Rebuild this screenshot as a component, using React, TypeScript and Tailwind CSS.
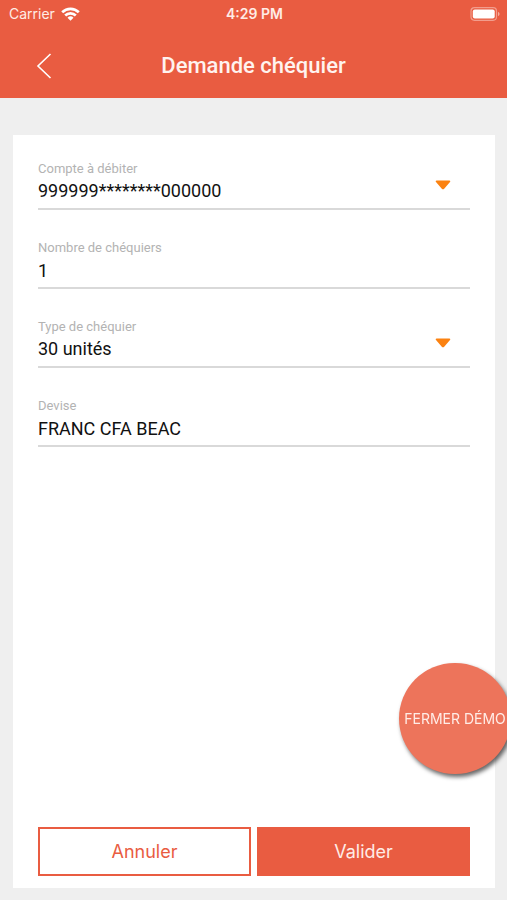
import { useState } from "react";

const inputClass =
  "block w-full h-8 pb-1 bg-transparent border-b-2 border-[#d9d9d9] rounded-none text-[18px] leading-[26px] text-[#111111] appearance-none outline-none focus:border-[#e95c41]";

const labelClass = "block text-[13px] leading-[18px] text-[#b3b3b3]";

function TextField({ id, label, value, onChange, readOnly }: {
  id: string;
  label: string;
  value: string;
  onChange?: (v: string) => void;
  readOnly?: boolean;
}) {
  return (
    <div>
      <label htmlFor={id} className={labelClass}>{label}</label>
      <input id={id} type="text" value={value} readOnly={readOnly}
        onChange={(e) => onChange?.(e.target.value)} className={inputClass} />
    </div>
  );
}

function SelectField({ id, label, value, options, onChange }: {
  id: string;
  label: string;
  value: string;
  options: string[];
  onChange: (v: string) => void;
}) {
  return (
    <div className="relative">
      <label htmlFor={id} className={labelClass}>{label}</label>
      <select id={id} value={value} onChange={(e) => onChange(e.target.value)} className={inputClass}>
        {options.map((o) => <option key={o} value={o}>{o}</option>)}
      </select>
      <svg className="absolute right-[19px] top-5 w-4 h-3 pointer-events-none" viewBox="0 0 16 12" aria-hidden="true">
        <path d="M1.600 .6h12.800c.9 0 1.200.9.6 1.500L9.200 8.700c-.7.700-1.700.700-2.400 0L1 2.100C.4 1.500.7.6 1.600.6z" fill="#fb8211" />
      </svg>
    </div>
  );
}

function StatusBar() {
  return (
    <div className="grid grid-cols-3 items-center h-[27px] pl-[9px] pr-[7px] font-[Inter,sans-serif] text-[14px] text-[#ffece6]">
      <div className="flex items-center gap-[6px]">
        <span>Carrier</span>
        <svg className="w-[19px] h-[14px]" viewBox="0 0 19 14" aria-hidden="true">
          <g fill="none" stroke="#fff" strokeWidth="2.700">
            <path d="M1.200 5.200a11.800 11.800 0 0 1 16.600 0" />
            <path d="M4.200 8.500a7.500 7.500 0 0 1 10.600 0" />
          </g>
          <path d="M9.500 13.700l-3-3a4.300 4.300 0 0 1 6 0z" fill="#fff" />
        </svg>
      </div>
      <span className="text-center font-semibold">4:29 PM</span>
      <svg className="justify-self-end w-[30px] h-[14px]" viewBox="0 0 30 14" aria-hidden="true">
        <rect x="1" y="0.700" width="25.500" height="12.600" rx="3.500" fill="none" stroke="#fff" strokeOpacity="0.400" strokeWidth="1.200" />
        <rect x="2.800" y="2.500" width="21.900" height="9" rx="2" fill="#fff" />
        <path d="M28 5v4c1-.4 1.500-1.100 1.500-2S29 5.400 28 5z" fill="#fff" fillOpacity="0.500" />
      </svg>
    </div>
  );
}

export default function App() {
  const [compte, setCompte] = useState("999999********000000");
  const [nombre, setNombre] = useState("1");
  const [type, setType] = useState("30 unités");

  return (
    <div className="flex flex-col min-h-screen bg-[#efefef] font-[Roboto,sans-serif]">
      <header className="bg-[#e95c41] pb-[7px]">
        <StatusBar />
        <div className="grid grid-cols-[1fr_auto_1fr] items-center h-16 pt-[14px] px-8">
          <button type="button" aria-label="Retour" className="w-6 h-7 flex items-center justify-center">
            <svg className="w-4 h-[26px]" viewBox="0 0 16 26" fill="none" stroke="#fff" strokeWidth="1.600" aria-hidden="true">
              <path d="M14.500 1L2 13l12.500 12" />
            </svg>
          </button>
          <h1 className="text-[22px] leading-7 font-medium text-[#fff3ef]">Demande chéquier</h1>
        </div>
      </header>

      <main className="flex flex-col flex-1 pt-[37px] pb-3 pl-[13px] pr-3">
        <form className="flex flex-col flex-1 bg-white px-[25px] pt-[25px] pb-3" onSubmit={(e) => e.preventDefault()}>
          <div className="flex flex-col gap-[29px]">
            <SelectField id="compte" label="Compte à débiter" value={compte}
              options={["999999********000000"]} onChange={setCompte} />
            <TextField id="nombre" label="Nombre de chéquiers" value={nombre} onChange={setNombre} />
            <SelectField id="type" label="Type de chéquier" value={type}
              options={["30 unités", "50 unités"]} onChange={setType} />
            <TextField id="devise" label="Devise" value="FRANC CFA BEAC" readOnly />
          </div>

          <div className="grid grid-cols-2 gap-[6px] mt-auto pt-8 font-[Inter,sans-serif] text-[18px]">
            <button type="button" className="h-[49px] border-2 border-[#e95c41] text-[#e95c41]">Annuler</button>
            <button type="submit" className="h-[49px] bg-[#e95c41] text-[#ffece6]">Valider</button>
          </div>
        </form>
      </main>

      {/* Floating button, hangs slightly off the right edge */}
      <button type="button"
        className="fixed -right-1 bottom-[126px] w-28 h-[111px] rounded-full bg-[#ed745b] text-[#ffece6] font-[Inter,sans-serif] text-[14px] whitespace-nowrap flex items-center justify-center shadow-[2px_3px_4px_rgba(0,0,0,0.6)]">
        FERMER DÉMO
      </button>
    </div>
  );
}
